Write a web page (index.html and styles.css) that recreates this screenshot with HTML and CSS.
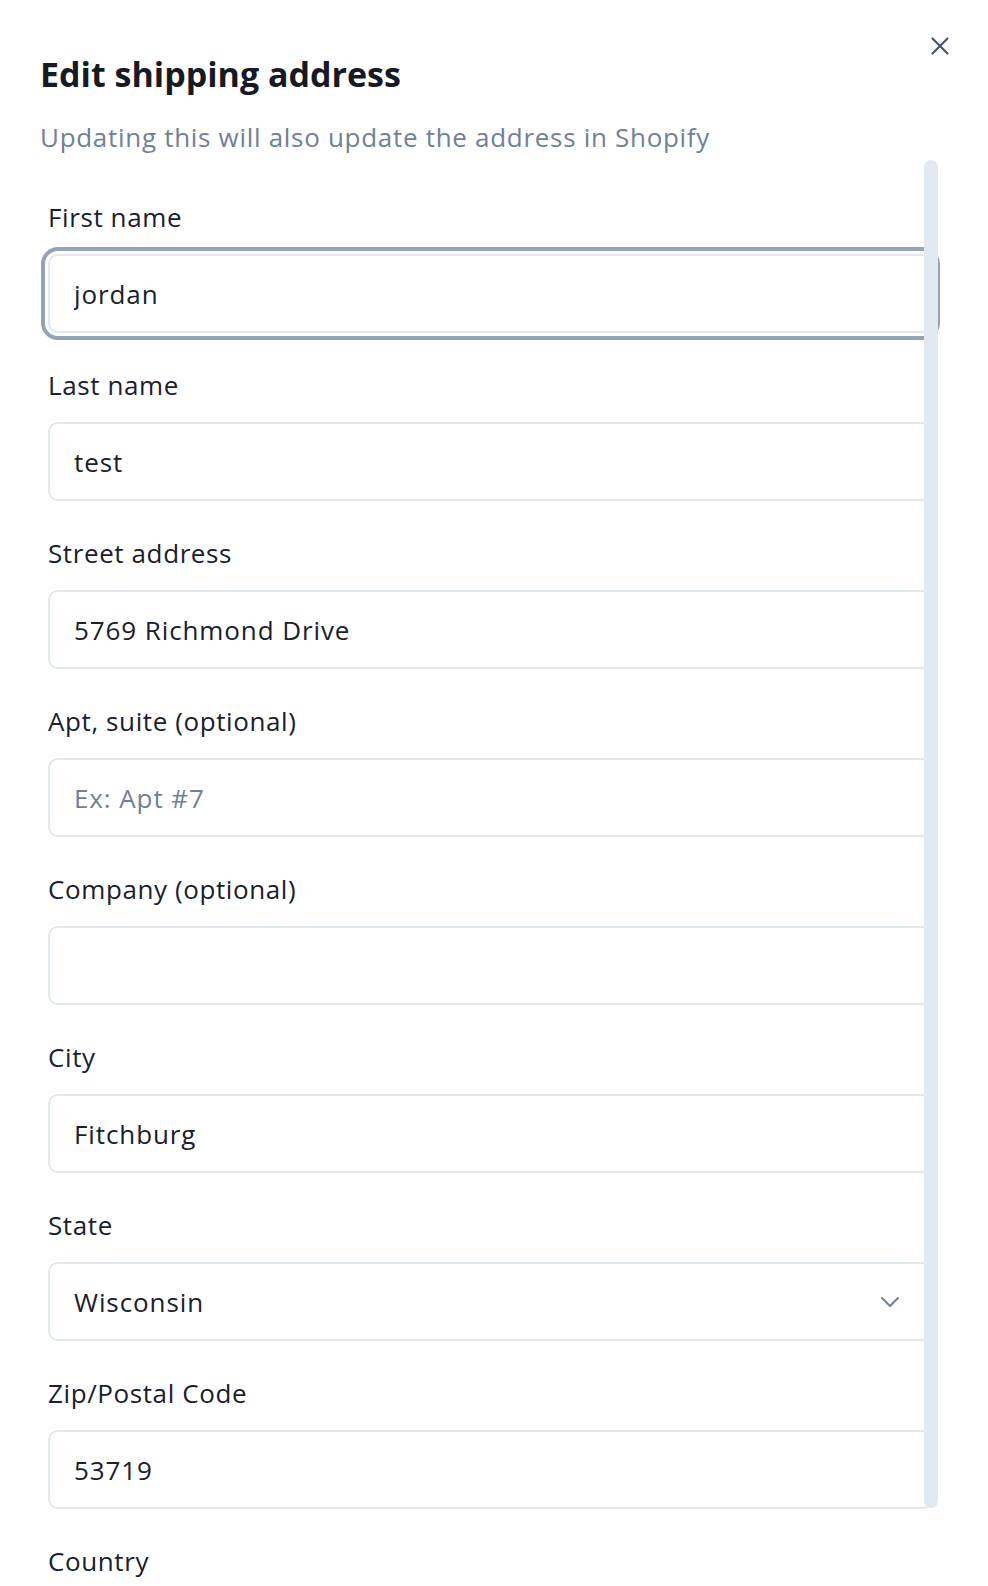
FILE: index.html
```html
<!DOCTYPE html>
<html lang="en">
<head>
    <meta charset="UTF-8">
    <meta name="viewport" content="width=device-width, initial-scale=1.0">
    <title>Edit shipping address</title>
    <link rel="stylesheet" href="styles.css">
</head>
<body>

    <div class="modal">
        <button class="close-btn" type="button" aria-label="Close">
            <svg width="20" height="20" viewBox="0 0 20 20" fill="none" stroke="#4a5568" stroke-width="2.2" stroke-linecap="round">
                <path d="M2.5 2.5 L17.5 17.5 M17.5 2.5 L2.5 17.5"/>
            </svg>
        </button>

        <div class="header">
            <h1 class="title">Edit shipping address</h1>
            <p class="subtitle">Updating this will also update the address in Shopify</p>
        </div>

        <div class="form-scroll">
            <form class="form">
                <div class="field">
                    <label for="firstName">First name</label>
                    <input id="firstName" class="input is-focused" type="text" value="jordan">
                </div>
                <div class="field">
                    <label for="lastName">Last name</label>
                    <input id="lastName" class="input" type="text" value="test">
                </div>
                <div class="field">
                    <label for="street">Street address</label>
                    <input id="street" class="input" type="text" value="5769 Richmond Drive">
                </div>
                <div class="field">
                    <label for="apt">Apt, suite (optional)</label>
                    <input id="apt" class="input" type="text" placeholder="Ex: Apt #7">
                </div>
                <div class="field">
                    <label for="company">Company (optional)</label>
                    <input id="company" class="input" type="text">
                </div>
                <div class="field">
                    <label for="city">City</label>
                    <input id="city" class="input" type="text" value="Fitchburg">
                </div>
                <div class="field">
                    <label for="state">State</label>
                    <div class="select-wrap">
                        <select id="state" class="input select">
                            <option>Wisconsin</option>
                        </select>
                        <svg class="chevron" width="20" height="12" viewBox="0 0 20 12" fill="none" stroke="#718096" stroke-width="2" stroke-linecap="round" stroke-linejoin="round">
                            <path d="M2 2 L10 10 L18 2"/>
                        </svg>
                    </div>
                </div>
                <div class="field">
                    <label for="zip">Zip/Postal Code</label>
                    <input id="zip" class="input" type="text" value="53719">
                </div>
                <div class="field">
                    <label for="country">Country</label>
                    <input id="country" class="input" type="text" value="United States">
                </div>
            </form>
        </div>

        <div class="scrollbar"></div>
    </div>

</body>
</html>
```

FILE: styles.css
```css
body {
    margin: 0;
    font-family: "Open Sans", Lato, sans-serif;
    color: #1a202c;
    background: #fff;
    height: 1586px;
    overflow: hidden;
}
.modal {
    position: relative;
    height: 1586px;
    overflow: hidden;
}
.close-btn {
    position: absolute;
    top: 36px;
    right: 38px;
    width: 20px;
    height: 20px;
    padding: 0;
    border: none;
    background: none;
    cursor: pointer;
}
.close-btn svg {
    display: block;
}
.header {
    padding: 54px 40px 0;
}
.title {
    margin: 0;
    font-size: 34px;
    line-height: 40px;
    font-weight: 700;
    color: #171923;
}
.subtitle {
    margin: 25px 0 0;
    font-size: 26px;
    line-height: 36px;
    letter-spacing: 0.7px;
    color: #718096;
}
.form-scroll {
    padding: 44px 55px 0 48px;
}
.field {
    display: flex;
    flex-direction: column;
    margin-bottom: 34px;
}
.field label {
    font-size: 26px;
    line-height: 36px;
    letter-spacing: 0.6px;
    margin-bottom: 19px;
    color: #1a202c;
}
.input {
    box-sizing: border-box;
    width: 100%;
    height: 79px;
    padding: 0 24px;
    border: 2px solid #e2e8f0;
    border-radius: 10px;
    background: #fff;
    font-family: inherit;
    font-size: 26px;
    letter-spacing: 0.9px;
    color: #1a202c;
    outline: none;
}
.input::placeholder {
    color: #718096;
}
.input.is-focused {
    box-shadow: 0 0 0 3px #fff, 0 0 0 7px #94a3b8;
}
.select-wrap {
    position: relative;
}
.select {
    appearance: none;
    -webkit-appearance: none;
}
.chevron {
    position: absolute;
    right: 33px;
    top: 34px;
}
.scrollbar {
    position: absolute;
    top: 160px;
    left: 924px;
    width: 14px;
    height: 1348px;
    border-radius: 7px;
    background: #e2e8f0;
}
```
